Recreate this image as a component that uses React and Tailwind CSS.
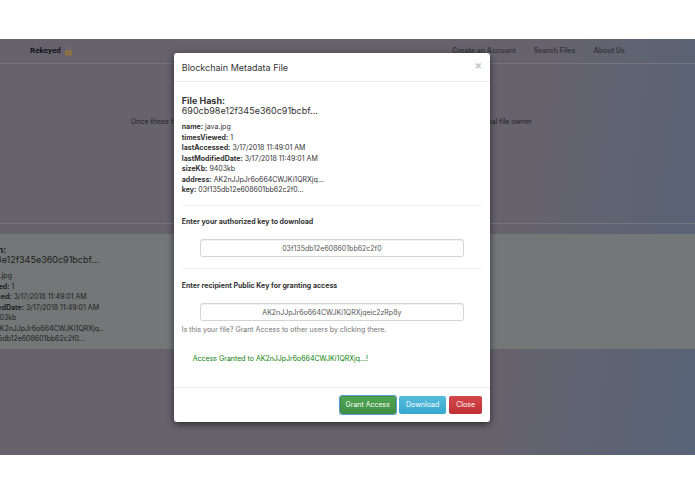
const metadata = [
  ["name", "java.jpg"],
  ["timesViewed", "1"],
  ["lastAccessed", "3/17/2018 11:49:01 AM"],
  ["lastModifiedDate", "3/17/2018 11:49:01 AM"],
  ["sizeKb", "9403kb"],
  ["address", "AK2nJJpJr6o664CWJKi1QRXjq..."],
  ["key", "03f135db12e608601bb62c2f0..."],
];

const FileDetails = () => (
  <div>
    <h4 className="text-[9px] leading-[10px]">
      <strong>File Hash:</strong>
      <br />
      690cb98e12f345e360c91bcbf...
    </h4>
    <ul className="mt-[6px] text-[7px] leading-normal">
      {metadata.map(([label, value]) => (
        <li key={label} className="whitespace-nowrap">
          <strong>{label}:</strong> {value}
        </li>
      ))}
    </ul>
  </div>
);

const Lock = () => (
  <svg viewBox="0 0 16 20" className="h-[10px] w-[9px]" aria-hidden="true">
    <path d="M4 10V6a4 4 0 0 1 8 0v4" fill="none" stroke="#77706a" strokeWidth="2" />
    <rect x="1" y="9" width="14" height="10" rx="1" fill="#937544" />
    <path d="M1 12h14M1 15h14" stroke="#846840" strokeWidth="1" />
  </svg>
);

const Navbar = () => (
  <nav className="flex h-[25px] items-center justify-between border-b border-[#76747d] pr-[70px] pl-[30px] text-[7px] font-bold">
    <a href="#home" className="flex items-center gap-[3px] font-['Roboto',sans-serif] text-[8px] text-[#141419]">
      Rekeyed <Lock />
    </a>
    <div className="flex gap-[18px] text-[#3b3a42]">
      <a href="#account">Create an Account</a>
      <a href="#search">Search Files</a>
      <a href="#about">About Us</a>
    </div>
  </nav>
);

const KeyField = ({ id, label, value }) => (
  <div>
    <label htmlFor={id} className="block font-bold">
      {label}
    </label>
    <input
      id={id}
      defaultValue={value}
      className="mx-[18px] mt-[12px] block h-[18px] w-[calc(100%-36px)] rounded-[3px] border border-[#d4d4d4] bg-white pt-px text-center text-[#555] shadow-[inset_0_1px_1px_#f0f0f0] outline-none"
    />
  </div>
);

const Modal = () => (
  <div
    role="dialog"
    aria-labelledby="modal-title"
    className="absolute top-[14px] right-[29.5%] left-[25%] rounded-[3px] bg-white text-[7px] leading-[10px] text-[#333] shadow-[0_2px_7px_rgba(0,0,0,0.6)]"
  >
    <div className="flex h-[29px] items-center justify-between border-b border-[#ebebeb] px-2">
      <h3 id="modal-title" className="pt-px text-[9px]">
        Blockchain Metadata File
      </h3>
      <button aria-label="Close dialog" className="pb-1 text-[11px] font-bold text-[#c4c4c4]">
        ×
      </button>
    </div>

    <div className="px-2 pt-[14px] pb-[23px]">
      <FileDetails />
      <hr className="mt-[9px] mb-[11px] border-[#eee]" />
      <KeyField id="file-key" label="Enter your authorized key to download" value="03f135db12e608601bb62c2f0" />
      <hr className="mt-[11px] mb-3 border-[#eee]" />
      <KeyField
        id="public-key"
        label="Enter recipient Public Key for granting access"
        value="AK2nJJpJr6o664CWJKi1QRXjqeic2zRp8y"
      />
      <p className="mt-1 text-[#737373]">
        Is this your file? Grant Access to other users by clicking there.
      </p>
      <p className="mt-[19px] ml-[11px] text-[#0b800b]">
        Access Granted to AK2nJJpJr6o664CWJKi1QRXjq...!
      </p>
    </div>

    <div className="flex justify-end gap-[3px] border-t border-[#e8e8e8] p-2 text-white">
      <button className="h-[18px] rounded-[2px] border border-[#3f8f43] bg-linear-to-b from-[#50a553] to-[#3f8f43] px-[5px] ring-1 ring-[#5b9fd6]">
        Grant Access
      </button>
      <button className="h-[18px] rounded-[2px] bg-linear-to-b from-[#55bbdb] to-[#36a9cf] px-[7px]">
        Download
      </button>
      <button className="h-[18px] rounded-[2px] bg-linear-to-b from-[#d3474b] to-[#c03035] px-[7px]">
        Close
      </button>
    </div>
  </div>
);

const App = () => (
  <main className="min-h-screen bg-white py-[39px] font-['Inter','Liberation_Sans',sans-serif]">
    <div className="relative overflow-hidden bg-[linear-gradient(98deg,#66636d_0%,#66636d_74%,#5f6372_85%,#5a6374_94%,#576379_100%)] pb-[106px] text-[#1f1f24]">
      <Navbar />
      <p className="flex justify-between pt-[53px] pr-[163px] pb-24 pl-[131px] text-[7px] leading-[10px]">
        <span>Once these files</span>
        <span>original file owner</span>
      </p>
      <hr className="border-[#76747d]" />
      <section className="mt-[10px] bg-[#737777] pt-[11px] pb-1">
        <div className="-ml-[37px]">
          <FileDetails />
        </div>
      </section>
      <Modal />
    </div>
  </main>
);

export default App;
